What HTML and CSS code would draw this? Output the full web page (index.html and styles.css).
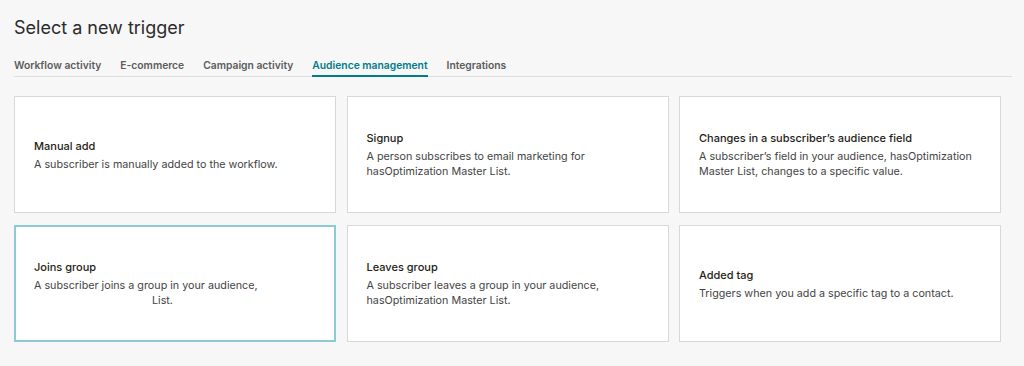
FILE: index.html
```html
<!DOCTYPE html>
<html>
<head>
<meta charset="utf-8">
<link rel="stylesheet" href="styles.css">
</head>
<body>
<div class="page">
  <h1 class="title">Select a new trigger</h1>
  <nav class="tabs">
    <span class="tab">Workflow activity</span>
    <span class="tab">E-commerce</span>
    <span class="tab">Campaign activity</span>
    <span class="tab active">Audience management</span>
    <span class="tab">Integrations</span>
  </nav>
  <div class="grid">
    <div class="card">
      <div class="card-title">Manual add</div>
      <div class="card-desc">A subscriber is manually added to the workflow.</div>
    </div>
    <div class="card">
      <div class="card-title">Signup</div>
      <div class="card-desc">A person subscribes to email marketing for hasOptimization Master List.</div>
    </div>
    <div class="card">
      <div class="card-title">Changes in a subscriber’s audience field</div>
      <div class="card-desc">A subscriber’s field in your audience, hasOptimization Master List, changes to a specific value.</div>
    </div>
    <div class="card selected">
      <div class="card-title">Joins group</div>
      <div class="card-desc">A subscriber joins a group in your audience,<br><span class="gap">List.</span></div>
    </div>
    <div class="card">
      <div class="card-title">Leaves group</div>
      <div class="card-desc">A subscriber leaves a group in your audience, hasOptimization Master List.</div>
    </div>
    <div class="card">
      <div class="card-title">Added tag</div>
      <div class="card-desc">Triggers when you add a specific tag to a contact.</div>
    </div>
  </div>
</div>
</body>
</html>
```
FILE: styles.css
```css
html, body {
  margin: 0;
  padding: 0;
  background: #f7f7f7;
}
body {
  font-family: Inter, "Liberation Sans", sans-serif;
  color: #241c15;
}
.page {
  padding: 16px 12px 0 14px;
}
.title {
  margin: 0;
  font-size: 18px;
  font-weight: 400;
  line-height: 24px;
  color: #2b2b2b;
}
.tabs {
  display: flex;
  gap: 19px;
  margin-top: 18px;
  border-bottom: 1px solid #dedede;
}
.tab {
  font-size: 10.3px;
  font-weight: 600;
  color: #5c5c5c;
  line-height: 14px;
  padding-bottom: 3px;
  border-bottom: 2px solid transparent;
  margin-bottom: -1px;
}
.tab.active {
  color: #007c89;
  border-bottom-color: #007c89;
}
.grid {
  width: 987px;
  margin-top: 19px;
  display: grid;
  grid-template-columns: repeat(3, 1fr);
  column-gap: 10.5px;
  row-gap: 12px;
}
.card {
  box-sizing: border-box;
  height: 117px;
  background: #fff;
  border: 1px solid #d8d8d8;
  padding: 0 19px;
  display: flex;
  flex-direction: column;
  justify-content: center;
}
.card.selected {
  border: 2px solid #8ccbd3;
  padding: 0 18px;
}
.card-title {
  font-size: 11px;
  font-weight: 500;
  line-height: 16px;
  color: #241c15;
  margin-bottom: 3px;
}
.card-desc {
  font-size: 10.75px;
  line-height: 15px;
  color: #444;
}
.gap {
  margin-left: 118px;
}
```
